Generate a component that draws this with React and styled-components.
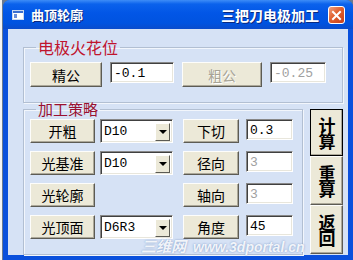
import React from 'react';
import styled, { createGlobalStyle } from 'styled-components';

const Global = createGlobalStyle`
  html, body {
    margin: 0;
    padding: 0;
    background: #e4e4e4;
    width: 353px;
    height: 260px;
    overflow: hidden;
  }
  * { box-sizing: border-box; }
`;

const CN = `"Noto Sans CJK SC", "Noto Sans", sans-serif`;
const MONO = `"Liberation Mono", "DejaVu Sans Mono", monospace`;

const Desk = styled.div`
  display: flex;
  width: 353px;
  height: 260px;
  padding-left: 3px;
  background: linear-gradient(to right, #f4f4f4 0, #f4f4f4 2px, #6a7a90 2px);
`;

const Window = styled.div`
  position: relative;
  width: 350px;
  height: 260px;
  display: flex;
  flex-direction: column;
  background: #0a50dc;
  border-radius: 7px 7px 0 0;
  overflow: hidden;
`;

const TitleBar = styled.div`
  height: 29px;
  flex: none;
  display: flex;
  align-items: center;
  padding: 0 8px 0 8px;
  background: linear-gradient(to bottom, #3e8df7 0%, #0b62ec 14%, #0256e6 45%, #0053e0 80%, #0a4ccc 100%);
  color: #fff;
  font-family: ${CN};
  font-weight: 700;
  font-size: 13px;
  text-shadow: 1px 1px 0 #0a2a80;
`;

const AppIcon = styled.svg`
  width: 12px;
  height: 10px;
  margin: 1px 7px 0 1px;
  flex: none;
`;

const Title = styled.span`
  flex: 1;
`;

const SubTitle = styled.span`
  font-size: 14px;
  margin-right: 9px;
`;

const CloseBtn = styled.div`
  width: 17px;
  height: 18px;
  margin-top: 1px;
  border: 1px solid #fff;
  border-radius: 3px;
  background: linear-gradient(135deg, #f0a080 0%, #e0602e 45%, #c8401a 100%);
  display: flex;
  align-items: center;
  justify-content: center;
`;

const Client = styled.div`
  flex: 1;
  margin: 0 5px 5px 5px;
  background: #d6e2f5;
  display: flex;
  flex-direction: column;
  padding: 0 5px 0 15px;
`;

const Group = styled.fieldset`
  margin: ${p => p.$top}px 0 0 0;
  padding: ${p => p.$pad};
  border: 1px solid #b2bfd2;
  box-shadow: inset 1px 1px 0 #f2f6fc, 1px 1px 0 #f2f6fc;
  min-width: 0;
  width: ${p => p.$w};
`;

const Legend = styled.legend`
  margin-left: 6px;
  padding: 0 2px;
  font-family: ${CN};
  font-size: ${p => p.$size}px;
  line-height: 16px;
  color: ${p => p.$color};
`;

const Row = styled.div`
  display: flex;
  align-items: flex-start;
  gap: 8px;
`;

const Grid = styled.div`
  display: grid;
  grid-template-columns: 65px 78px 66px 54px;
  row-gap: 8px;
  & > :nth-child(4n + 2) { margin-left: 5px; }
  & > :nth-child(4n + 3) { margin-left: 10px; }
  & > :nth-child(4n + 4) { margin-left: 7px; }
`;

const Btn = styled.div`
  width: ${p => p.$w}px;
  height: ${p => p.$h || 24}px;
  background: #ece9d8;
  border: 1px solid;
  border-color: #fdfdfb #5c5b54 #5c5b54 #fdfdfb;
  box-shadow: inset -1px -1px 0 #aca899;
  display: flex;
  align-items: center;
  justify-content: center;
  font-family: ${CN};
  font-size: 14px;
  color: ${p => (p.$off ? '#a7a496' : '#000')};
  text-shadow: ${p => (p.$off ? '1px 1px 0 #fff' : 'none')};
`;

const Field = styled.div`
  width: ${p => p.$w}px;
  height: 21px;
  background: #fff;
  border: 1px solid;
  border-color: #888 #fff #fff #888;
  box-shadow: inset 1px 1px 0 #404040, inset -1px -1px 0 #e8e6dc;
  padding: 1px 0 0 3px;
  display: flex;
  align-items: center;
  font-family: ${MONO};
  font-size: 13px;
  color: ${p => (p.$off ? '#a0a0a0' : '#000')};
  overflow: hidden;
  white-space: nowrap;
`;

const Combo = styled(Field)`
  height: 24px;
  padding-right: 2px;
  justify-content: space-between;
  width: 73px;
`;

const Drop = styled.div`
  width: 15px;
  height: 18px;
  background: #ece9d8;
  border: 1px solid;
  border-color: #fff #5c5b54 #5c5b54 #fff;
  display: flex;
  align-items: center;
  justify-content: center;
  &::after {
    content: '';
    border-left: 4px solid transparent;
    border-right: 4px solid transparent;
    border-top: 4px solid #000;
  }
`;

const Lower = styled.div`
  display: flex;
  align-items: flex-start;
  flex: 1;
`;

const Side = styled.div`
  margin: 6px 0 0 7px;
  display: flex;
  flex-direction: column;
`;

const SideBtn = styled(Btn)`
  width: 33px;
  font-size: 17px;
  font-weight: 700;
  span {
    writing-mode: vertical-rl;
    line-height: 20px;
    letter-spacing: -1px;
  }
  ${p => p.$def && 'outline: 1px solid #000; outline-offset: -1px; border-color: #fff #404040 #404040 #fff;'}
`;

const Mark = styled.div`
  position: absolute;
  left: 138px;
  bottom: 4px;
  font-family: "Liberation Sans", Arial, sans-serif;
  font-style: italic;
  font-weight: 700;
  font-size: 14px;
  line-height: 18px;
  color: rgba(255, 255, 255, 0.88);
  text-shadow: 0 0 2px rgba(110, 140, 190, 0.9);
  white-space: nowrap;
  pointer-events: none;
  span { font-family: ${CN}; font-size: 15px; margin-right: 7px; }
`;

const Empty = styled.div``;

export default function App() {
  return (
    <Desk>
      <Global />
      <Window>
        <TitleBar>
          <AppIcon viewBox="0 0 12 10">
            <rect x="0.5" y="0.5" width="11" height="9" fill="#fff" stroke="#c8d8f0" />
            <rect x="1" y="1" width="10" height="2" fill="#3a6fd0" />
            <rect x="2" y="4" width="3" height="4" fill="#6a8ed8" />
          </AppIcon>
          <Title>曲顶轮廓</Title>
          <SubTitle>三把刀电极加工</SubTitle>
          <CloseBtn>
            <svg width="11" height="11" viewBox="0 0 11 11">
              <path d="M2 2 L9 9 M9 2 L2 9" stroke="#fff" strokeWidth="2" strokeLinecap="square" />
            </svg>
          </CloseBtn>
        </TitleBar>
        <Client>
          <Group $top={10} $pad="7px 0 15px 6px" $w="320px">
            <Legend $size={16} $color="#c0142e">电极火花位</Legend>
            <Row>
              <Btn $w={72} $h={25}>精公</Btn>
              <Field $w={64}>-0.1</Field>
              <Btn $w={80} $h={25} $off>粗公</Btn>
              <Field $w={56} $off>-0.25</Field>
            </Row>
          </Group>
          <Lower>
            <Group $top={-2} $pad="2px 0 15px 6px" $w="280px">
              <Legend $size={15} $color="#9a1030">加工策略</Legend>
              <Grid>
                <Btn $w={65}>开粗</Btn>
                <Combo>D10<Drop /></Combo>
                <Btn $w={56}>下切</Btn>
                <Field $w={47}>0.3</Field>

                <Btn $w={65}>光基准</Btn>
                <Combo>D10<Drop /></Combo>
                <Btn $w={56}>径向</Btn>
                <Field $w={47} $off>3</Field>

                <Btn $w={65}>光轮廓</Btn>
                <Empty />
                <Btn $w={56}>轴向</Btn>
                <Field $w={47} $off>3</Field>

                <Btn $w={65}>光顶面</Btn>
                <Combo>D6R3<Drop /></Combo>
                <Btn $w={56}>角度</Btn>
                <Field $w={47}>45</Field>
              </Grid>
            </Group>
            <Side>
              <SideBtn $h={47} $def><span>计算</span></SideBtn>
              <SideBtn $h={49}><span>重算</span></SideBtn>
              <SideBtn $h={49}><span>返回</span></SideBtn>
            </Side>
          </Lower>
        </Client>
        <Mark><span>三维网</span>www.3dportal.cn</Mark>
      </Window>
    </Desk>
  );
}
